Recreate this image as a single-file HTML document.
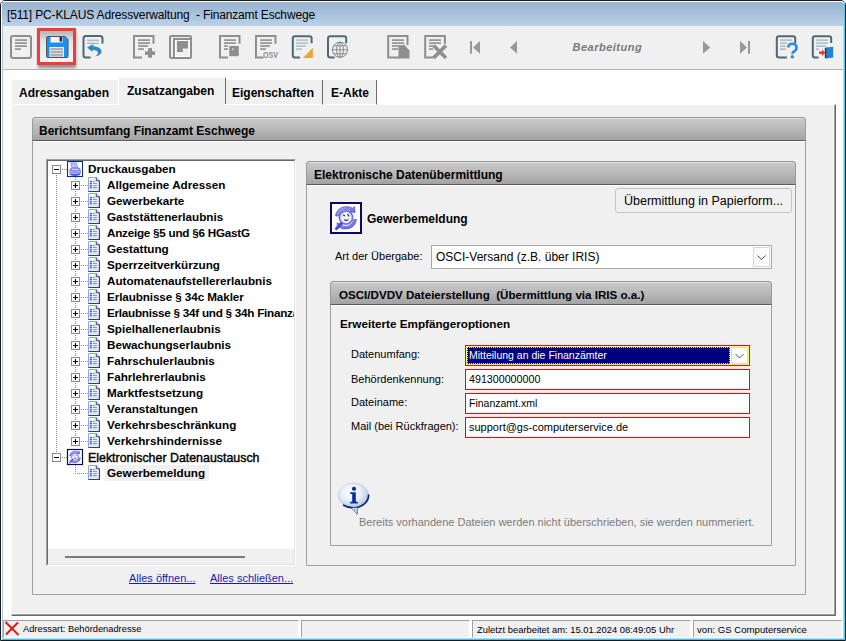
<!DOCTYPE html>
<html><head><meta charset="utf-8">
<style>
*{box-sizing:border-box;margin:0;padding:0}
html,body{width:846px;height:641px;overflow:hidden;background:#fff;font-family:"Liberation Sans",sans-serif;color:#000}
.a{position:absolute}
.t{position:absolute;white-space:nowrap;line-height:1}
.hdr{background:linear-gradient(#cbcbcb,#b6b6b6 55%,#a3a3a3);border-radius:4px 4px 0 0;border:1px solid #9a9a9a;border-bottom:1px solid #5a5a5a;box-shadow:inset 0 1px 0 #dedede}
.box{border:1px solid #a0a0a0}
.b{font-weight:bold}
.inp{position:absolute;background:#fff;border:1px solid #ff0000}
</style></head><body>
<!-- window frame -->
<div class="a" style="left:0;top:0;width:846px;height:641px;border:1px solid #1a1a1a;border-radius:5px 5px 0 0"></div>
<div class="a" style="left:1px;top:1px;width:844px;height:638px;border-top:1px solid #fff;border-left:1px solid #fff;border-radius:4px 4px 0 0"></div>
<div class="a" style="left:2px;top:2px;width:1px;height:637px;background:#a8c8e8"></div>
<div class="a" style="left:844px;top:2px;width:1px;height:637px;background:#44ccf4"></div>
<div class="a" style="left:843px;top:26px;width:1px;height:612px;background:#c4d0f2"></div>
<div class="a" style="left:2px;top:638px;width:842px;height:1px;background:#c8d0f0"></div>
<div class="a" style="left:2px;top:639px;width:843px;height:1px;background:#30c8f0"></div>
<!-- title -->
<div class="a" style="left:2px;top:2px;width:842px;height:24px;background:linear-gradient(#97b1ce,#bad2e9);border-radius:3px 3px 0 0"></div>
<div class="t" style="left:7px;top:9px;font-size:12px;letter-spacing:-0.15px">[511] PC-KLAUS Adressverwaltung&nbsp; - Finanzamt Eschwege</div>
<!-- toolbar -->
<div class="a" style="left:3px;top:26px;width:840px;height:43px;background:#f0f0f0"></div>
<div class="a" style="left:3px;top:69px;width:840px;height:1px;background:#b4b4b4"></div>
<svg class="a" style="left:0;top:0" width="846" height="70" viewBox="0 0 846 70">
<defs>
<linearGradient id="prs" x1="0" y1="0" x2="0" y2="1"><stop offset="0" stop-color="#b4b4b4"/><stop offset="0.35" stop-color="#e6e6e6"/><stop offset="1" stop-color="#f4f4f4"/></linearGradient>
</defs>
<g fill="none" stroke="#8e8e8e" stroke-width="2">
<rect x="11" y="36" width="20" height="22" rx="2"/>
</g>
<g fill="#8e8e8e">
<rect x="15" y="39.3" width="12" height="1.6"/><rect x="15" y="42.3" width="12" height="1.6"/><rect x="15" y="45.3" width="12" height="1.6"/><rect x="15" y="48.3" width="6" height="1.6"/>
</g>
<!-- save pressed -->
<defs><filter id="sh" x="-20%" y="-20%" width="140%" height="150%"><feGaussianBlur stdDeviation="1.6"/></filter></defs><rect x="38" y="31" width="38" height="37" fill="#909090" filter="url(#sh)"/>
<rect x="37" y="28" width="39" height="37" fill="#f23c3c"/>
<rect x="40" y="31" width="33" height="31" fill="url(#prs)"/>
<path d="M46.5,37.5 Q46.5,36.5 47.5,36.5 H65 L68,39.5 V56.5 Q68,57.5 67,57.5 H47.5 Q46.5,57.5 46.5,56.5 Z" fill="#1a90f0" stroke="#4a5660" stroke-width="1"/>
<rect x="50.5" y="37" width="12" height="5.5" fill="#f4f4f4"/>
<rect x="59.5" y="37" width="2.5" height="4.5" fill="#303030"/>
<rect x="49.5" y="47" width="14.5" height="10" fill="#f0f0f0"/>
<rect x="50.5" y="48" width="12.5" height="8.5" fill="#b0b0b0"/>
<rect x="50.5" y="50" width="12.5" height="1" fill="#d8d8d8"/><rect x="50.5" y="53" width="12.5" height="1" fill="#d8d8d8"/>
<!-- undo -->
<path d="M90.5,57.5 H86 Q83.5,57.5 83.5,55 V38.5 Q83.5,36 86,36 H100 Q102.5,36 102.5,38.5 V43.5" fill="none" stroke="#4f6676" stroke-width="2"/>
<rect x="87" y="39.6" width="12" height="1.4" fill="#a8bac6"/><rect x="87" y="42.6" width="12" height="1.4" fill="#a8bac6"/>
<path d="M87,47.6 L93.5,44 L93,46.2 Q101,46.5 101.5,51.5 Q101.5,55 95,56.5 Q99,54 97.5,51.5 Q96,49.5 92.5,50 L92.5,52 Z" fill="#2d8ac0"/>
<!-- doc+ -->
<path d="M142,57.5 H134 V36 H153.5 V43.7" fill="none" stroke="#8e8e8e" stroke-width="2"/>
<g fill="#8e8e8e">
<rect x="138" y="39.3" width="12" height="1.6"/><rect x="138" y="42.3" width="12" height="1.6"/><rect x="138" y="45.2" width="10" height="1.6"/><rect x="138" y="48.3" width="6" height="1.6"/>
<rect x="148.1" y="48.1" width="3.9" height="9.6"/><rect x="145" y="51.3" width="10" height="3.6"/>
</g>
<!-- copy -->
<g fill="none" stroke="#8e8e8e" stroke-width="2">
<rect x="170" y="36" width="21" height="22" rx="1.5"/>
<path d="M174,57 V39 H191"/>
</g>
<rect x="175.5" y="40.5" width="14" height="16" fill="none" stroke="#fff" stroke-width="1"/>
<path d="M177,41 H188 V48.6 H182.8 V52 H177 Z" fill="#8e8e8e"/>
<!-- doc xls -->
<path d="M228,57.5 H220 V36 H239.5 V43.7" fill="none" stroke="#8e8e8e" stroke-width="2"/>
<g fill="#8e8e8e">
<rect x="224" y="39.3" width="12" height="1.6"/><rect x="224" y="42.3" width="12" height="1.6"/><rect x="224" y="45.2" width="4" height="1.6"/><rect x="224" y="48.3" width="4" height="1.6"/>
<rect x="229.3" y="46" width="9.5" height="10.2"/>
</g>
<rect x="232" y="48.5" width="1.5" height="1.5" fill="#e0e0e0"/>
<!-- OSV -->
<path d="M263.5,57.5 H256 V36 H275.5 V43.7" fill="none" stroke="#8e8e8e" stroke-width="2"/>
<g fill="#8e8e8e">
<rect x="260.2" y="39.3" width="11.7" height="1.6"/><rect x="260.2" y="42.3" width="11.7" height="1.6"/><rect x="260.2" y="45.2" width="9.7" height="1.6"/><rect x="260.2" y="48.3" width="5.6" height="1.6"/>
</g>
<text x="263" y="57.7" font-family="Liberation Sans" font-weight="bold" font-size="9" fill="#8e8e8e" textLength="15" lengthAdjust="spacingAndGlyphs">OSV</text>
<!-- orange doc -->
<path d="M300,57.5 H295 Q292.8,57.5 292.8,55.3 V38.5 Q292.8,36.2 295,36.2 H309.5 Q311.6,36.2 311.6,38.5 V43.3" fill="none" stroke="#4e6878" stroke-width="2"/>
<g fill="#a8bac6">
<rect x="296" y="39.4" width="12" height="1.4"/><rect x="296" y="42.4" width="12" height="1.4"/><rect x="296" y="45.4" width="10" height="1.4"/><rect x="296" y="48.4" width="6" height="1.4"/>
</g>
<path d="M312.9,47.8 V58 H302.9 Z" fill="#f2a03a"/>
<!-- globe doc -->
<path d="M334.6,57.5 H330.5 Q328,57.5 328,55 V38.5 Q328,36.2 330.5,36.2 H344 Q346.2,36.2 346.2,38.5 V43.3" fill="none" stroke="#4e6878" stroke-width="2"/>
<g fill="none" stroke="#7a8288" stroke-width="0.9">
<circle cx="340" cy="49.8" r="7.6"/>
<ellipse cx="340" cy="49.8" rx="3.4" ry="7.6"/>
<line x1="340" y1="42.2" x2="340" y2="57.4"/>
<line x1="332.4" y1="49.8" x2="347.6" y2="49.8"/>
<path d="M333.5,45.8 H346.5 M333.5,53.8 H346.5"/>
</g>
<!-- stamp doc -->
<path d="M399.3,57.5 H388.2 V36 H407.5 V44.9" fill="none" stroke="#8e8e8e" stroke-width="2"/>
<g fill="#8e8e8e">
<rect x="392" y="39.3" width="12" height="1.6"/><rect x="392" y="42.3" width="12" height="1.6"/><rect x="392" y="45.2" width="10" height="1.6"/><rect x="392" y="48.3" width="6" height="1.6"/>
<path d="M398.5,47 L404,44.5 L409.5,50.5 V58.5 H398.5 Z"/>
</g>
<!-- doc X -->
<path d="M433,57.5 H425.2 V36 H444.9 V43.7" fill="none" stroke="#8e8e8e" stroke-width="2"/>
<g fill="#8e8e8e">
<rect x="429" y="39.3" width="12" height="1.6"/><rect x="429" y="42.3" width="12" height="1.6"/><rect x="429" y="45.2" width="4" height="1.6"/><rect x="429" y="48.3" width="4" height="1.6"/>
</g>
<path d="M433.5,45.5 L446,58 M446,45.5 L433.5,58" stroke="#8e8e8e" stroke-width="3.6"/>
<!-- nav -->
<g fill="#999">
<rect x="470" y="41" width="2" height="12.8"/>
<path d="M473,47.4 L480,41 V53.8 Z"/>
<path d="M510,47.4 L517,41 V53.8 Z"/>
<path d="M710.3,47.4 L703,41 V53.8 Z"/>
<path d="M747,47.4 L740,41 V53.8 Z"/>
<rect x="748" y="41" width="2" height="12.8"/>
</g>
<!-- help doc -->
<path d="M786.9,57.5 H779 Q776.8,57.5 776.8,55.3 V38.5 Q776.8,36.2 779,36.2 H793 Q795.2,36.2 795.2,38.5 V43" fill="none" stroke="#4e6878" stroke-width="2"/>
<g fill="#a8b6c2">
<rect x="780" y="39.4" width="12" height="1.4"/><rect x="780" y="42.4" width="7" height="1.4"/><rect x="780" y="45.4" width="6" height="1.4"/><rect x="780" y="48.4" width="6" height="1.4"/>
</g>
<path d="M788.3,47.5 Q788.5,43.8 792.3,43.8 Q796.5,43.8 796.5,47.8 Q796.5,50.5 793.5,51.8 Q792.5,52.5 792.5,54" fill="none" stroke="#2a8ae8" stroke-width="2.6"/>
<circle cx="792.3" cy="56.8" r="1.7" fill="#2a8ae8"/>
<!-- exit doc -->
<path d="M818.6,57.5 H815 Q812.8,57.5 812.8,55.3 V38.5 Q812.8,36.2 815,36.2 H829 Q831.2,36.2 831.2,38.5 V43" fill="none" stroke="#4e6878" stroke-width="2"/>
<g fill="#a8b6c2">
<rect x="816" y="39.4" width="12" height="1.4"/><rect x="816" y="42.4" width="12" height="1.4"/><rect x="816" y="45.4" width="10" height="1.4"/><rect x="816" y="48.4" width="3" height="1.4"/>
</g>
<path d="M826,47.5 L833.2,46.8 V57.5 L826,58.5 Z" fill="#1e86d0"/>
<path d="M824.8,48 L826.5,47.5 V58.5 L824.8,58 Z" fill="#0c4a80"/>
<path d="M819,51.5 H822 V49.5 L825.5,52.8 L822,56 V54 H819 Z" fill="#f03a2a"/>
<!-- Bearbeitung -->
<text x="572.5" y="50.8" font-family="Liberation Sans" font-weight="bold" font-style="italic" font-size="11" letter-spacing="0.5" fill="#7a7a7e">Bearbeitung</text>
</svg>

<!-- tabs -->
<div class="a" style="left:11px;top:104px;width:825px;height:512px;background:#f0f0f0;border-left:1px solid #fff;border-top:1px solid #fff;border-right:1px solid #696969;border-bottom:1px solid #696969;box-shadow:inset -1px -1px 0 #a0a0a0, inset -2px -2px 0 #f8f8f8"></div>
<div class="a" style="left:11px;top:79px;width:107px;height:26px;background:#f0f0f0;border-left:1px solid #fff;border-top:1px solid #fff;border-bottom:1px solid #fff"></div>
<div class="a" style="left:118px;top:77px;width:108px;height:27px;background:#f0f0f0;border-left:1px solid #fff;border-top:1px solid #fff;border-right:1px solid #696969"></div>
<div class="a" style="left:119px;top:104px;width:106px;height:1px;background:#f0f0f0"></div>
<div class="a" style="left:226px;top:80px;width:97px;height:25px;background:#f0f0f0;border-right:1px solid #696969;border-bottom:1px solid #fff"></div>
<div class="a" style="left:323px;top:80px;width:54px;height:25px;background:#f0f0f0;border-right:1px solid #696969;border-bottom:1px solid #fff"></div>
<div class="t b" style="left:19px;top:87px;font-size:12px">Adressangaben</div>
<div class="t b" style="left:127px;top:85px;font-size:12px">Zusatzangaben</div>
<div class="t b" style="left:232px;top:87px;font-size:12px">Eigenschaften</div>
<div class="t b" style="left:331px;top:87px;font-size:12px">E-Akte</div>
<!-- group box -->
<div class="a box" style="left:32px;top:117px;width:774px;height:478px;border-radius:4px 4px 0 0"></div>
<div class="a hdr" style="left:32px;top:117px;width:774px;height:24px"></div>
<div class="a" style="left:33px;top:141px;width:772px;height:1px;background:#fff"></div>
<div class="t b" style="left:39px;top:125px;font-size:12px">Berichtsumfang Finanzamt Eschwege</div>
<!-- tree -->
<div class="a" style="left:46px;top:159px;width:250px;height:407px;border-top:1px solid #a0a0a0;border-left:1px solid #a0a0a0;border-right:1px solid #fff;border-bottom:1px solid #fff"></div>
<div class="a" style="left:47px;top:160px;width:248px;height:405px;background:#fff;border-top:1px solid #696969;border-left:1px solid #696969;border-right:1px solid #e3e3e3;border-bottom:1px solid #e3e3e3"></div>
<div class="a" style="left:48px;top:549px;width:246px;height:15px;background:#f0f0f0"></div>
<div class="a" style="left:65px;top:556px;width:180px;height:2px;background:#7a7a7a"></div>
<!--TREE--><div class="a" style="left:48px;top:161px;width:246px;height:388px;overflow:hidden"><div class="a" style="left:-48px;top:-161px;width:846px;height:641px"><div class="t" style="left:88px;top:163px;font-size:11.7px;font-weight:bold">Druckausgaben</div><div class="t" style="left:107px;top:179px;font-size:11.7px;font-weight:bold">Allgemeine Adressen</div><div class="t" style="left:107px;top:195px;font-size:11.7px;font-weight:bold">Gewerbekarte</div><div class="t" style="left:107px;top:211px;font-size:11.7px;font-weight:bold">Gaststättenerlaubnis</div><div class="t" style="left:107px;top:227px;font-size:11.7px;font-weight:bold;letter-spacing:-0.25px">Anzeige §5 und §6 HGastG</div><div class="t" style="left:107px;top:243px;font-size:11.7px;font-weight:bold">Gestattung</div><div class="t" style="left:107px;top:259px;font-size:11.7px;font-weight:bold">Sperrzeitverkürzung</div><div class="t" style="left:107px;top:275px;font-size:11.7px;font-weight:bold">Automatenaufstellererlaubnis</div><div class="t" style="left:107px;top:291px;font-size:11.7px;font-weight:bold;letter-spacing:-0.1px">Erlaubnisse § 34c Makler</div><div class="t" style="left:107px;top:307px;font-size:11.7px;font-weight:bold;letter-spacing:-0.25px">Erlaubnisse § 34f und § 34h Finanzanlagenvermittler</div><div class="t" style="left:107px;top:323px;font-size:11.7px;font-weight:bold">Spielhallenerlaubnis</div><div class="t" style="left:107px;top:339px;font-size:11.7px;font-weight:bold">Bewachungserlaubnis</div><div class="t" style="left:107px;top:355px;font-size:11.7px;font-weight:bold">Fahrschulerlaubnis</div><div class="t" style="left:107px;top:371px;font-size:11.7px;font-weight:bold">Fahrlehrerlaubnis</div><div class="t" style="left:107px;top:387px;font-size:11.7px;font-weight:bold">Marktfestsetzung</div><div class="t" style="left:107px;top:403px;font-size:11.7px;font-weight:bold">Veranstaltungen</div><div class="t" style="left:107px;top:419px;font-size:11.7px;font-weight:bold">Verkehrsbeschränkung</div><div class="t" style="left:107px;top:435px;font-size:11.7px;font-weight:bold">Verkehrshindernisse</div><div class="t" style="left:88px;top:452px;font-size:12.4px;-webkit-text-stroke:0.4px #000">Elektronischer Datenaustausch</div><div class="a" style="left:105px;top:465px;width:104px;height:16px;background:#f0f0f0"></div><div class="t" style="left:107px;top:467px;font-size:11.7px;font-weight:bold">Gewerbemeldung</div>
<svg class="a" style="left:0;top:0" width="846" height="641" viewBox="0 0 846 641">
<defs>
<linearGradient id="dg" x1="0" y1="0" x2="1" y2="1"><stop offset="0" stop-color="#ffffff"/><stop offset="1" stop-color="#d4def4"/></linearGradient>
<pattern id="dotv" width="1" height="2" patternUnits="userSpaceOnUse"><rect width="1" height="1" fill="#8a8a8a"/></pattern>
<pattern id="doth" width="2" height="1" patternUnits="userSpaceOnUse"><rect width="1" height="1" fill="#8a8a8a"/></pattern>
<symbol id="doc" viewBox="0 0 12 15" width="12" height="15">
<path d="M0.5,0.5 H8.3 L11.5,3.7 V14.5 H0.5 Z" fill="url(#dg)" stroke="#9aaac8" stroke-width="1"/>
<path d="M11.5,3.7 V14.5 H0.5" fill="none" stroke="#34425e" stroke-width="1.2"/>
<path d="M8.3,0.5 V3.7 H11.5" fill="#c8d4ea" stroke="#34425e" stroke-width="0.9"/>
<g fill="#2a62e6"><rect x="1.8" y="3.9" width="2.2" height="1.3"/><rect x="1.8" y="5.9" width="2.2" height="1.3"/><rect x="1.8" y="8" width="2.2" height="1.3"/><rect x="1.8" y="10" width="2.2" height="1.3"/></g>
<g fill="#8e98b0"><rect x="5" y="3.9" width="2" height="1.1"/><rect x="5" y="5.9" width="3.9" height="1.1"/><rect x="5" y="8" width="3.9" height="1.1"/><rect x="5" y="10" width="3.9" height="1.1"/></g>
</symbol>
</defs>

<line x1="56.5" y1="175" x2="56.5" y2="453" stroke="#8a8a8a" stroke-dasharray="1 1"/>
<line x1="75.5" y1="177" x2="75.5" y2="437" stroke="#8a8a8a" stroke-dasharray="1 1"/>
<line x1="75.5" y1="465" x2="75.5" y2="474" stroke="#8a8a8a" stroke-dasharray="1 1"/>
<line x1="77" y1="473.5" x2="88" y2="473.5" stroke="#8a8a8a" stroke-dasharray="1 1"/>
<rect x="52.5" y="165.5" width="8" height="8" fill="#fff" stroke="#8c8c8c"/>
<rect x="54" y="169" width="5" height="1" fill="#000"/>
<line x1="62" y1="169.5" x2="67" y2="169.5" stroke="#8a8a8a" stroke-width="1" stroke-dasharray="1 1"/>
<rect x="67.5" y="161.5" width="15" height="15" fill="#fff" stroke="#0c2c96" stroke-width="1.1"/>
<g transform="translate(67,161)">
<path d="M3.8,1.8 L9.2,1.8 L10.8,6.5 L5,6.8 Z" fill="#d4d4fa" stroke="#7a80e8" stroke-width="0.8"/>
<path d="M5.2,3.5 H8.8 M5.5,5 H9.5" stroke="#9a9af0" stroke-width="0.7"/>
<path d="M2.4,9.5 Q2.6,6.8 5.5,6.6 L11,6.4 Q13.8,6.8 13.8,9.5 L13.8,12 Q13.5,14.2 9.5,14.4 L6.5,14.4 Q2.5,14.2 2.4,12 Z" fill="#7c84ec"/>
<path d="M4.5,8.4 H11.5" stroke="#e8e8fc" stroke-width="1"/>
<path d="M3,10.4 Q8,11.5 13.2,10.2 M3.2,12.2 Q8,13.2 13,12" stroke="#c0c4f8" stroke-width="0.8" fill="none"/>
<path d="M3.5,13.4 Q8,15 12.8,13.2" stroke="#2838c8" stroke-width="1.1" fill="none"/>
</g>
<rect x="71.5" y="181.5" width="8" height="8" fill="#fff" stroke="#8c8c8c"/>
<rect x="73" y="185" width="5" height="1" fill="#000"/>
<rect x="75" y="183" width="1" height="5" fill="#000"/>
<line x1="81" y1="185.5" x2="88" y2="185.5" stroke="#8a8a8a" stroke-width="1" stroke-dasharray="1 1"/>
<use href="#doc" x="88" y="177"/>
<rect x="71.5" y="197.5" width="8" height="8" fill="#fff" stroke="#8c8c8c"/>
<rect x="73" y="201" width="5" height="1" fill="#000"/>
<rect x="75" y="199" width="1" height="5" fill="#000"/>
<line x1="81" y1="201.5" x2="88" y2="201.5" stroke="#8a8a8a" stroke-width="1" stroke-dasharray="1 1"/>
<use href="#doc" x="88" y="193"/>
<rect x="71.5" y="213.5" width="8" height="8" fill="#fff" stroke="#8c8c8c"/>
<rect x="73" y="217" width="5" height="1" fill="#000"/>
<rect x="75" y="215" width="1" height="5" fill="#000"/>
<line x1="81" y1="217.5" x2="88" y2="217.5" stroke="#8a8a8a" stroke-width="1" stroke-dasharray="1 1"/>
<use href="#doc" x="88" y="209"/>
<rect x="71.5" y="229.5" width="8" height="8" fill="#fff" stroke="#8c8c8c"/>
<rect x="73" y="233" width="5" height="1" fill="#000"/>
<rect x="75" y="231" width="1" height="5" fill="#000"/>
<line x1="81" y1="233.5" x2="88" y2="233.5" stroke="#8a8a8a" stroke-width="1" stroke-dasharray="1 1"/>
<use href="#doc" x="88" y="225"/>
<rect x="71.5" y="245.5" width="8" height="8" fill="#fff" stroke="#8c8c8c"/>
<rect x="73" y="249" width="5" height="1" fill="#000"/>
<rect x="75" y="247" width="1" height="5" fill="#000"/>
<line x1="81" y1="249.5" x2="88" y2="249.5" stroke="#8a8a8a" stroke-width="1" stroke-dasharray="1 1"/>
<use href="#doc" x="88" y="241"/>
<rect x="71.5" y="261.5" width="8" height="8" fill="#fff" stroke="#8c8c8c"/>
<rect x="73" y="265" width="5" height="1" fill="#000"/>
<rect x="75" y="263" width="1" height="5" fill="#000"/>
<line x1="81" y1="265.5" x2="88" y2="265.5" stroke="#8a8a8a" stroke-width="1" stroke-dasharray="1 1"/>
<use href="#doc" x="88" y="257"/>
<rect x="71.5" y="277.5" width="8" height="8" fill="#fff" stroke="#8c8c8c"/>
<rect x="73" y="281" width="5" height="1" fill="#000"/>
<rect x="75" y="279" width="1" height="5" fill="#000"/>
<line x1="81" y1="281.5" x2="88" y2="281.5" stroke="#8a8a8a" stroke-width="1" stroke-dasharray="1 1"/>
<use href="#doc" x="88" y="273"/>
<rect x="71.5" y="293.5" width="8" height="8" fill="#fff" stroke="#8c8c8c"/>
<rect x="73" y="297" width="5" height="1" fill="#000"/>
<rect x="75" y="295" width="1" height="5" fill="#000"/>
<line x1="81" y1="297.5" x2="88" y2="297.5" stroke="#8a8a8a" stroke-width="1" stroke-dasharray="1 1"/>
<use href="#doc" x="88" y="289"/>
<rect x="71.5" y="309.5" width="8" height="8" fill="#fff" stroke="#8c8c8c"/>
<rect x="73" y="313" width="5" height="1" fill="#000"/>
<rect x="75" y="311" width="1" height="5" fill="#000"/>
<line x1="81" y1="313.5" x2="88" y2="313.5" stroke="#8a8a8a" stroke-width="1" stroke-dasharray="1 1"/>
<use href="#doc" x="88" y="305"/>
<rect x="71.5" y="325.5" width="8" height="8" fill="#fff" stroke="#8c8c8c"/>
<rect x="73" y="329" width="5" height="1" fill="#000"/>
<rect x="75" y="327" width="1" height="5" fill="#000"/>
<line x1="81" y1="329.5" x2="88" y2="329.5" stroke="#8a8a8a" stroke-width="1" stroke-dasharray="1 1"/>
<use href="#doc" x="88" y="321"/>
<rect x="71.5" y="341.5" width="8" height="8" fill="#fff" stroke="#8c8c8c"/>
<rect x="73" y="345" width="5" height="1" fill="#000"/>
<rect x="75" y="343" width="1" height="5" fill="#000"/>
<line x1="81" y1="345.5" x2="88" y2="345.5" stroke="#8a8a8a" stroke-width="1" stroke-dasharray="1 1"/>
<use href="#doc" x="88" y="337"/>
<rect x="71.5" y="357.5" width="8" height="8" fill="#fff" stroke="#8c8c8c"/>
<rect x="73" y="361" width="5" height="1" fill="#000"/>
<rect x="75" y="359" width="1" height="5" fill="#000"/>
<line x1="81" y1="361.5" x2="88" y2="361.5" stroke="#8a8a8a" stroke-width="1" stroke-dasharray="1 1"/>
<use href="#doc" x="88" y="353"/>
<rect x="71.5" y="373.5" width="8" height="8" fill="#fff" stroke="#8c8c8c"/>
<rect x="73" y="377" width="5" height="1" fill="#000"/>
<rect x="75" y="375" width="1" height="5" fill="#000"/>
<line x1="81" y1="377.5" x2="88" y2="377.5" stroke="#8a8a8a" stroke-width="1" stroke-dasharray="1 1"/>
<use href="#doc" x="88" y="369"/>
<rect x="71.5" y="389.5" width="8" height="8" fill="#fff" stroke="#8c8c8c"/>
<rect x="73" y="393" width="5" height="1" fill="#000"/>
<rect x="75" y="391" width="1" height="5" fill="#000"/>
<line x1="81" y1="393.5" x2="88" y2="393.5" stroke="#8a8a8a" stroke-width="1" stroke-dasharray="1 1"/>
<use href="#doc" x="88" y="385"/>
<rect x="71.5" y="405.5" width="8" height="8" fill="#fff" stroke="#8c8c8c"/>
<rect x="73" y="409" width="5" height="1" fill="#000"/>
<rect x="75" y="407" width="1" height="5" fill="#000"/>
<line x1="81" y1="409.5" x2="88" y2="409.5" stroke="#8a8a8a" stroke-width="1" stroke-dasharray="1 1"/>
<use href="#doc" x="88" y="401"/>
<rect x="71.5" y="421.5" width="8" height="8" fill="#fff" stroke="#8c8c8c"/>
<rect x="73" y="425" width="5" height="1" fill="#000"/>
<rect x="75" y="423" width="1" height="5" fill="#000"/>
<line x1="81" y1="425.5" x2="88" y2="425.5" stroke="#8a8a8a" stroke-width="1" stroke-dasharray="1 1"/>
<use href="#doc" x="88" y="417"/>
<rect x="71.5" y="437.5" width="8" height="8" fill="#fff" stroke="#8c8c8c"/>
<rect x="73" y="441" width="5" height="1" fill="#000"/>
<rect x="75" y="439" width="1" height="5" fill="#000"/>
<line x1="81" y1="441.5" x2="88" y2="441.5" stroke="#8a8a8a" stroke-width="1" stroke-dasharray="1 1"/>
<use href="#doc" x="88" y="433"/>
<rect x="52.5" y="453.5" width="8" height="8" fill="#fff" stroke="#8c8c8c"/>
<rect x="54" y="457" width="5" height="1" fill="#000"/>
<line x1="62" y1="457.5" x2="67" y2="457.5" stroke="#8a8a8a" stroke-width="1" stroke-dasharray="1 1"/>
<rect x="67.5" y="449.5" width="15" height="15" fill="#fff" stroke="#0a0a60" stroke-width="1.2"/>
<use href="#osciC" x="66.5" y="448.5" width="17" height="17"/>
<use href="#doc" x="88" y="465"/>
</svg></div></div><!--/TREE-->
<div class="t" style="left:129px;top:573px;font-size:11px;color:#1a1ab4;text-decoration:underline">Alles öffnen...</div>
<div class="t" style="left:210px;top:573px;font-size:11px;color:#1a1ab4;text-decoration:underline">Alles schließen...</div>
<!-- right panel -->
<div class="a box" style="left:306px;top:161px;width:490px;height:405px;border-radius:4px 4px 0 0"></div>
<div class="a hdr" style="left:306px;top:161px;width:490px;height:24px"></div>
<div class="a" style="left:307px;top:185px;width:488px;height:1px;background:#fff"></div>
<div class="t b" style="left:314px;top:169px;font-size:12px">Elektronische Datenübermittlung</div>
<div class="a" style="left:615px;top:188px;width:177px;height:25px;border:1px solid #c4c4c4;border-radius:3px;background:#f0f0f0"></div>
<div class="t" style="left:624px;top:195px;font-size:12.5px">Übermittlung in Papierform...</div>
<svg class="a" style="left:330px;top:202px" width="32" height="32" viewBox="0 0 32 32">
<defs><linearGradient id="og" x1="0" y1="0" x2="1" y2="1"><stop offset="0" stop-color="#b4b4f6"/><stop offset="1" stop-color="#5a5ae0"/></linearGradient>
<symbol id="osciC" viewBox="0 0 32 32">
<path d="M5.5,14 Q6.5,7 13,5 Q18.5,3.6 22.5,6.2 L24.5,4.5 L25,10.5 L19.5,9.8 L21.2,8.6 Q17,6.3 13.5,7.8 Q9.5,9.5 8.5,14 Z" fill="url(#og)" stroke="#3838b0" stroke-width="0.6"/>
<path d="M26.5,17.5 Q25.5,24.5 19,26.5 Q13.5,28 9.5,25.5 L7.5,27 L7,21 L12.5,22 L10.8,23.2 Q15,25.5 18.5,24 Q22.8,22.3 23.8,17.5 Z" fill="url(#og)" stroke="#3838b0" stroke-width="0.6"/>
<circle cx="16" cy="15.5" r="6.6" fill="#f0f0ff" stroke="#7070e0" stroke-width="1.8"/>
<path d="M13.2,12.8 L14.8,14 M17.5,12.2 L19.2,14.3 M14.2,17.6 Q16,19.2 18.3,17.6" stroke="#202050" stroke-width="1.1" fill="none"/>
<path d="M5.5,27.5 L12,20.8" stroke="#4a4ae0" stroke-width="2.6"/>
</symbol></defs>
<rect x="1" y="1" width="30" height="30" fill="#fff" stroke="#0a0a5e" stroke-width="2"/>
<use href="#osciC" x="0" y="0" width="32" height="32"/>
</svg>
<div class="t b" style="left:367px;top:213px;font-size:12px">Gewerbemeldung</div>
<div class="t" style="left:335px;top:251px;font-size:11px">Art der Übergabe:</div>
<div class="a" style="left:431px;top:245px;width:341px;height:24px;border:1px solid #a8a8a8;background:#fff"></div>
<div class="a" style="left:753px;top:247px;width:17px;height:20px;border:1px solid #d8d8d8;background:#fcfcfc"></div>
<svg class="a" style="left:753px;top:247px" width="17" height="20" viewBox="0 0 17 20"><path d="M4.5,8.5 L8.5,12.5 L12.5,8.5" fill="none" stroke="#505050" stroke-width="1"/></svg>
<div class="t" style="left:436px;top:251px;font-size:12px">OSCI-Versand (z.B. über IRIS)</div>
<!-- sub panel -->
<div class="a box" style="left:330px;top:281px;width:442px;height:265px;border-radius:4px 4px 0 0"></div>
<div class="a hdr" style="left:330px;top:281px;width:442px;height:24px"></div>
<div class="a" style="left:331px;top:305px;width:440px;height:1px;background:#fff"></div>
<div class="t b" style="left:339px;top:289px;font-size:11.6px">OSCI/DVDV Dateierstellung&nbsp; (Übermittlung via IRIS o.a.)</div>
<div class="t b" style="left:340px;top:318px;font-size:11.7px">Erweiterte Empfängeroptionen</div>
<div class="t" style="left:351px;top:349px;font-size:11px">Datenumfang:</div>
<div class="t" style="left:351px;top:374px;font-size:11px">Behördenkennung:</div>
<div class="t" style="left:351px;top:397px;font-size:11px">Dateiname:</div>
<div class="t" style="left:351px;top:421px;font-size:11px">Mail (bei Rückfragen):</div>
<div class="inp" style="left:465px;top:345px;width:285px;height:21px"></div>
<div class="a" style="left:466px;top:346px;width:283px;height:19px;border:1px solid #ffff60"></div>
<div class="a" style="left:467px;top:347px;width:263px;height:17px;background:#000080;border:1px dotted #e8e860"></div>
<div class="a" style="left:731px;top:347px;width:17px;height:17px;border:1px solid #d8d8d8;background:#fcfcfc"></div>
<svg class="a" style="left:731px;top:347px" width="17" height="17" viewBox="0 0 17 17"><path d="M4.5,7 L8.5,11 L12.5,7" fill="none" stroke="#505050" stroke-width="1"/></svg>
<div class="t" style="left:469px;top:350px;font-size:10.5px;color:#fff">Mitteilung an die Finanzämter</div>
<div class="inp" style="left:465px;top:369px;width:285px;height:21px"></div>
<div class="t" style="left:469px;top:374px;font-size:10.7px">491300000000</div>
<div class="inp" style="left:465px;top:393px;width:285px;height:21px"></div>
<div class="t" style="left:469px;top:398px;font-size:10.5px">Finanzamt.xml</div>
<div class="inp" style="left:465px;top:417px;width:285px;height:21px"></div>
<div class="t" style="left:469px;top:422px;font-size:11px">support@gs-computerservice.de</div>
<svg class="a" style="left:336px;top:481px" width="36" height="36" viewBox="0 0 36 36">
<defs><radialGradient id="ig" cx="0.42" cy="0.38" r="0.65"><stop offset="0" stop-color="#ffffff"/><stop offset="0.55" stop-color="#e4eefa"/><stop offset="1" stop-color="#a8c0e0"/></radialGradient></defs>
<path d="M13,24.5 L21.3,33.2 L21,26 Z" fill="#b8cce6" stroke="#24467e" stroke-width="0.9"/>
<ellipse cx="17.4" cy="14.5" rx="15.3" ry="12.3" fill="url(#ig)" stroke="#c4d2e4" stroke-width="0.9"/>
<path d="M32.6,13.5 C33,21 26,26.8 17.4,26.8 C13,26.8 10,25.8 7,24" stroke="#0e2a64" stroke-width="1.7" fill="none"/>
<path d="M21,26.5 L21.3,33 L15,27" fill="#b8cce6" stroke="none"/>
<circle cx="18" cy="7.8" r="2.1" fill="#0a2a9c"/>
<path d="M14.2,11.2 H19.8 V20.8 H21.8 V22.6 H14.2 V20.8 H16.2 V13 H14.2 Z" fill="#0a2a9c"/>
</svg>
<div class="t" style="left:359px;top:517px;font-size:11px;color:#7c7c7c">Bereits vorhandene Dateien werden nicht überschrieben, sie werden nummeriert.</div>
<!-- status bar -->
<div class="a" style="left:3px;top:620px;width:296px;height:18px;border-top:1px solid #a0a0a0;border-left:1px solid #a0a0a0;border-right:1px solid #fff;border-bottom:1px solid #fff;background:#f0f0f0"></div>
<div class="a" style="left:301px;top:620px;width:169px;height:18px;border-top:1px solid #a0a0a0;border-left:1px solid #a0a0a0;border-right:1px solid #fff;border-bottom:1px solid #fff;background:#f0f0f0"></div>
<div class="a" style="left:472px;top:620px;width:219px;height:18px;border-top:1px solid #a0a0a0;border-left:1px solid #a0a0a0;border-right:1px solid #fff;border-bottom:1px solid #fff;background:#f0f0f0"></div>
<div class="a" style="left:693px;top:620px;width:149px;height:18px;border-top:1px solid #a0a0a0;border-left:1px solid #a0a0a0;border-right:1px solid #fff;border-bottom:1px solid #fff;background:#f0f0f0"></div>
<svg class="a" style="left:4px;top:621px" width="16" height="15" viewBox="0 0 16 15"><path d="M1.5,1 L14.5,14 M14,1.5 L2,13.5" stroke="#e01c10" stroke-width="2"/></svg>
<div class="t" style="left:23px;top:625px;font-size:9.3px">Adressart: Behördenadresse</div>
<div class="t" style="left:477px;top:625px;font-size:9.4px">Zuletzt bearbeitet am: 15.01.2024 08:49:05 Uhr</div>
<div class="t" style="left:697px;top:625px;font-size:9.6px">von: GS Computerservice</div>
</body></html>
